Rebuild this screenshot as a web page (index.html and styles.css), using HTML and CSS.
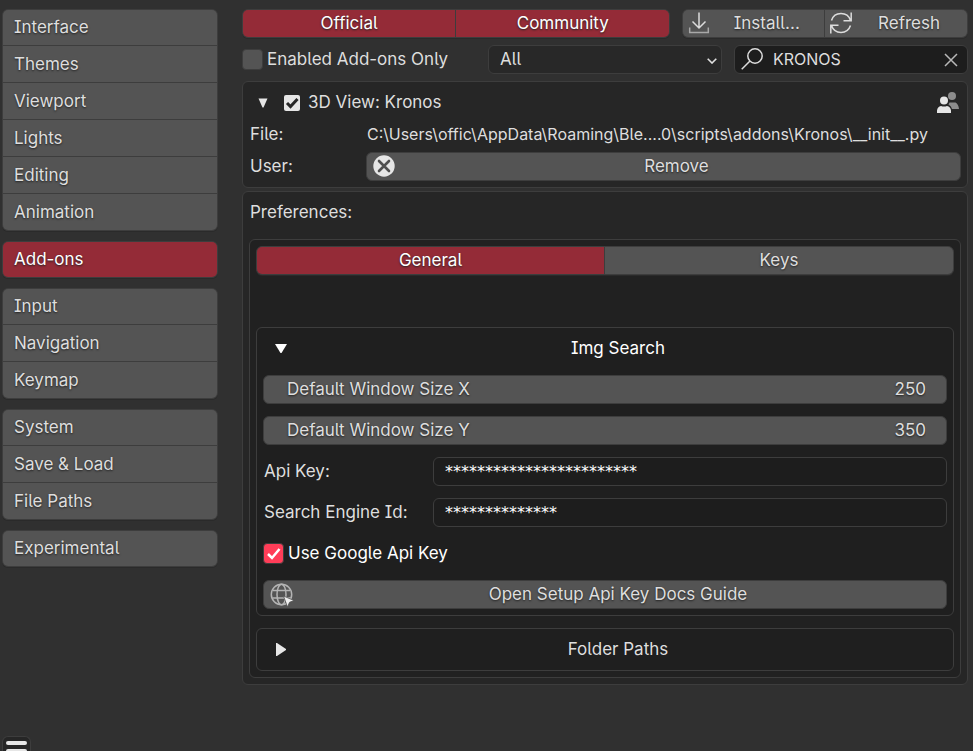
FILE: index.html
```html
<!DOCTYPE html>
<html lang="en">
<head>
<meta charset="utf-8">
<title>Preferences</title>
<link rel="stylesheet" href="styles.css">
</head>
<body>
<div class="app">
  <nav class="sidebar">
    <div class="nav-group">
      <button>Interface</button>
      <button>Themes</button>
      <button>Viewport</button>
      <button>Lights</button>
      <button>Editing</button>
      <button>Animation</button>
    </div>
    <div class="nav-group">
      <button class="active">Add-ons</button>
    </div>
    <div class="nav-group">
      <button>Input</button>
      <button>Navigation</button>
      <button>Keymap</button>
    </div>
    <div class="nav-group">
      <button>System</button>
      <button>Save &amp; Load</button>
      <button>File Paths</button>
    </div>
    <div class="nav-group">
      <button>Experimental</button>
    </div>
  </nav>

  <main class="content">
    <div class="toolbar">
      <div class="segmented">
        <button class="active">Official</button>
        <button class="active">Community</button>
      </div>
      <div class="segmented">
        <button class="with-icon">
          <svg class="icon" viewBox="0 0 22 22" fill="none" stroke-width="1.5"><path d="M11 0.5V16M4.5 9.5L11 16l6.500-6.500" stroke="#dcdcdc"/><path d="M1.700 15.500V20.500H20.300V15.500" stroke="#a8a8a8"/></svg>
          Install...
        </button>
        <button class="with-icon">
          <svg class="icon" viewBox="0 0 22 22" fill="none" stroke="#dcdcdc" stroke-width="1.5"><path d="M1.500 8.500A10 10 0 0 1 20.500 8.500M21.200 0.500V8.700H13.500M20.500 13.500A10 10 0 0 1 1.500 13.500M0.800 21.500V13.300H8.500"/></svg>
          Refresh
        </button>
      </div>
    </div>

    <div class="filters">
      <label class="check"><input type="checkbox">Enabled Add-ons Only</label>
      <div class="select-box">
        <select aria-label="Category"><option>All</option></select>
        <svg class="chevron" viewBox="0 0 10 6" fill="none" stroke="#e0e0e0" stroke-width="1.600"><path d="M0.700 0.700L5 5l4.300-4.300"/></svg>
      </div>
      <div class="search">
        <svg class="icon" viewBox="0 0 22 22" fill="none" stroke="#dcdcdc" stroke-width="1.500"><circle cx="14" cy="8" r="7.200"/><path d="M9 13L0.700 21.300"/></svg>
        <input type="text" aria-label="Search add-ons" value="KRONOS">
        <button class="clear" aria-label="Clear search"><svg viewBox="0 0 14 14" fill="none" stroke="#b8b8b8" stroke-width="1.500"><path d="M1 1l12 12M13 1L1 13"/></svg></button>
      </div>
    </div>

    <section class="panel addon">
      <div class="addon-head">
        <button class="toggle" aria-label="Collapse add-on"><svg viewBox="0 0 10 10" fill="#e6e6e6"><path d="M0.500 0.500h9L5.500 9.500h-1z"/></svg></button>
        <label class="addon-name"><input type="checkbox" class="white" checked>3D View: Kronos</label>
        <svg class="people" viewBox="0 0 22 22"><g fill="#8c8c8c"><circle cx="15" cy="4" r="4"/><path d="M12.500 10.500h6q3 1.500 3.500 6.500h-7q-0.500-3-3.500-4.500z"/></g><g fill="#e6e6e6"><circle cx="7" cy="8.500" r="4"/><path d="M0 21v-2.500q0.500-4 4-4.500q3 1.200 6 0q3.500 0.500 4 4.500V21z"/></g></svg>
      </div>
      <div class="info-row">
        <span>File:</span>
        <span class="path">C:\Users\offic\AppData\Roaming\Ble....0\scripts\addons\Kronos\__init__.py</span>
      </div>
      <div class="info-row">
        <span>User:</span>
        <button class="btn with-icon">
          <svg class="icon" viewBox="0 0 22 22"><circle cx="11" cy="11" r="10.700" fill="#e6e6e6"/><path d="M6 6l10 10M16 6L6 16" stroke="#505050" stroke-width="2.600" stroke-linecap="round"/></svg>
          Remove
        </button>
      </div>
    </section>

    <section class="panel prefs">
      <h2>Preferences:</h2>
      <div class="panel inner">
        <div class="segmented tabs">
          <button class="active">General</button>
          <button>Keys</button>
        </div>
        <div class="panel box">
          <button class="box-head">
            <svg class="tri-down" viewBox="0 0 12 9" fill="#fff"><path d="M0 0h12L6.500 9h-1z"/></svg>
            Img Search
          </button>
          <label class="number">Default Window Size X<input type="text" inputmode="numeric" value="250"></label>
          <label class="number">Default Window Size Y<input type="text" inputmode="numeric" value="350"></label>
          <div class="field">
            <label for="api-key">Api Key:</label>
            <input id="api-key" type="text" value="************************">
          </div>
          <div class="field">
            <label for="engine-id">Search Engine Id:</label>
            <input id="engine-id" type="text" value="**************">
          </div>
          <label class="check bright"><input type="checkbox" checked>Use Google Api Key</label>
          <button class="btn with-icon">
            <svg class="icon globe" viewBox="0 0 24 24" fill="none" stroke="#b4b4b4" stroke-width="1.500"><circle cx="11.500" cy="11.500" r="10.200"/><ellipse cx="11.500" cy="11.500" rx="4.500" ry="10.200"/><path d="M2.800 7.500h17.400M2.300 15h18.500"/><path d="M13.500 13l10.500 4.500-4.500 1.800-2 4.700z" fill="#eee" stroke="#545454" stroke-width="0.800"/></svg>
            Open Setup Api Key Docs Guide
          </button>
        </div>
        <div class="panel box">
          <button class="box-head closed">
            <svg class="tri-right" viewBox="0 0 10 13" fill="#e6e6e6"><path d="M0 0h1l9 6v1l-9 6H0z"/></svg>
            Folder Paths
          </button>
        </div>
      </div>
    </section>
  </main>
</div>
<button class="menu" aria-label="Menu"><span></span><span></span></button>
</body>
</html>
```
FILE: styles.css
```css
* {
  box-sizing: border-box;
}

html,
body {
  margin: 0;
  height: 100%;
}

body {
  position: relative;
  overflow: hidden;
  background: #303030;
  color: #dedede;
  font: 17px/27px Inter, sans-serif;
  font-feature-settings: "cv05", "cv08";
  font-optical-sizing: none;
}

button,
input,
select {
  margin: 0;
  padding: 0;
  border: 0;
  background: none;
  color: inherit;
  font: inherit;
  font-feature-settings: inherit;
  appearance: none;
  outline: none;
}

svg {
  display: block;
}

.app {
  display: grid;
  grid-template-columns: 216px minmax(0, 1fr);
  gap: 24px;
  padding: 9px 5px 0 2px;
}

/* Sidebar */
.sidebar {
  display: flex;
  flex-direction: column;
  gap: 10px;
}

.nav-group {
  display: flex;
  flex-direction: column;
  gap: 1px;
  border: 1px solid #3d3d3d;
  border-radius: 6px;
  background: #3d3d3d;
  overflow: hidden;
  box-shadow: 0 1px 0 #2a2a2a;
}

.nav-group button {
  height: 36px;
  padding: 0 11px;
  background: #545454;
  text-align: left;
  text-shadow: 0 1px 2px #222;
}

.nav-group button:first-child {
  height: 35px;
}

.nav-group .active,
.segmented .active {
  background: #942b37;
  color: #fff;
}

/* Controls */
.content {
  display: flex;
  flex-direction: column;
  gap: 7px;
  min-width: 0;
}

.toolbar {
  display: grid;
  grid-template-columns: 3fr 2fr;
  gap: 12px;
}

.segmented {
  display: grid;
  grid-template-columns: calc(50% - 1px) 1fr;
  gap: 1px;
  border: 1px solid #3d3d3d;
  border-radius: 6px;
  background: #3d3d3d;
  overflow: hidden;
  box-shadow: 0 1px 0 #2a2a2a;
}

.segmented button,
.btn {
  position: relative;
  height: 27px;
  background: #545454;
  text-shadow: 0 1px 2px #222;
}

.btn {
  height: 29px;
  border: 1px solid #3d3d3d;
  border-radius: 6px;
}

.segmented .with-icon,
.btn.with-icon {
  padding-left: 26px;
}

.icon {
  position: absolute;
  top: 2px;
  left: 6px;
  width: 22px;
  height: 22px;
}

.segmented .icon {
  left: 5px;
}

.icon.globe {
  width: 24px;
  height: 24px;
}

.filters {
  display: grid;
  grid-template-columns: repeat(3, minmax(0, 1fr));
  gap: 12px;
}

.check {
  display: flex;
  align-items: center;
  gap: 4px;
  height: 29px;
  white-space: nowrap;
}

.check input {
  flex: none;
  width: 21px;
  height: 21px;
  border: 1px solid #3d3d3d;
  border-radius: 4px;
  background: #545454;
}

.check input:checked {
  background: #ff3d58 url("data:image/svg+xml,%3Csvg xmlns='http://www.w3.org/2000/svg' viewBox='0 0 19 19'%3E%3Cpath d='M4 10l4 4 7.500-9' fill='none' stroke='white' stroke-width='2.500'/%3E%3C/svg%3E") center / 19px no-repeat;
}

.bright {
  color: #fff;
}

.select-box,
.search {
  position: relative;
  height: 29px;
  border: 1px solid #3d3d3d;
  border-radius: 6px;
  background: #282828;
}

.select-box select {
  width: 100%;
  height: 27px;
  padding: 0 11px;
}

.chevron {
  position: absolute;
  top: 12px;
  right: 4px;
  width: 10px;
  height: 6px;
  pointer-events: none;
}

.search {
  display: flex;
  align-items: center;
  padding: 0 9px 0 38px;
  background: #1d1d1d;
}

.search input {
  flex: 1;
  min-width: 0;
  height: 27px;
  font-size: 16px;
}

.clear svg {
  width: 14px;
  height: 14px;
}

/* Panels */
.panel {
  display: flex;
  flex-direction: column;
  padding: 6px;
  border: 1px solid #3d3d3d;
  border-radius: 6px;
  background: #262626;
}

.addon {
  gap: 3px;
}

.addon-head {
  display: flex;
  align-items: center;
  height: 29px;
  padding: 0 2px 0 9px;
}

.toggle svg {
  width: 10px;
  height: 10px;
}

.addon-name {
  display: flex;
  flex: 1;
  align-items: center;
  gap: 8px;
  margin-left: 16px;
}

.white {
  width: 16px;
  height: 16px;
  border-radius: 2px;
  background: #e6e6e6 url("data:image/svg+xml,%3Csvg xmlns='http://www.w3.org/2000/svg' viewBox='0 0 16 16'%3E%3Cpath d='M3 8l3.500 3.500 7-7.500' fill='none' stroke='%23262626' stroke-width='3'/%3E%3C/svg%3E") center / 16px no-repeat;
}

.people {
  width: 22px;
  height: 22px;
}

.info-row {
  display: grid;
  grid-template-columns: 117px minmax(0, 1fr);
  align-items: center;
  height: 29px;
}

.info-row span {
  padding-left: 1px;
  white-space: nowrap;
}

.info-row .path {
  font-size: 16px;
}

.prefs {
  gap: 12px;
  margin-top: -4px;
}

.prefs h2 {
  margin: 0;
  padding: 1px;
  font: inherit;
}

.inner {
  gap: 12px;
  background: #212121;
}

.tabs {
  margin-bottom: 40px;
}

.box {
  gap: 12px;
  background: #1f1f1f;
}

.box-head {
  position: relative;
  height: 29px;
  padding-left: 26px;
  color: #fff;
}

.box-head.closed {
  color: #dedede;
}

.tri-down {
  position: absolute;
  top: 10px;
  left: 12px;
  width: 12px;
  height: 9px;
}

.tri-right {
  position: absolute;
  top: 8px;
  left: 13px;
  width: 10px;
  height: 13px;
}

.number {
  display: flex;
  justify-content: space-between;
  height: 29px;
  padding: 0 20px 0 23px;
  border: 1px solid #3d3d3d;
  border-radius: 6px;
  background: #545454;
  text-shadow: 0 1px 2px #222;
}

.number input {
  width: 80px;
  height: 27px;
  text-align: right;
  text-shadow: inherit;
}

.field {
  display: grid;
  grid-template-columns: 170px minmax(0, 1fr);
  align-items: center;
}

.field label {
  padding-left: 1px;
}

.field input {
  height: 29px;
  padding: 0 11px;
  border: 1px solid #3d3d3d;
  border-radius: 6px;
  background: #1d1d1d;
  color: #fff;
  font-family: "DejaVu Sans", sans-serif;
  font-size: 16px;
}

.menu {
  position: absolute;
  bottom: 0;
  left: 2px;
  display: flex;
  flex-direction: column;
  gap: 4px;
  width: 29px;
  height: 15px;
  padding: 4px 3px 0;
  border: 1px solid #3d3d3d;
  border-bottom: 0;
  border-radius: 6px 6px 0 0;
  background: #262626;
  overflow: hidden;
}

.menu span {
  flex: none;
  height: 4px;
  border-radius: 2px;
  background: #e6e6e6;
}
```
